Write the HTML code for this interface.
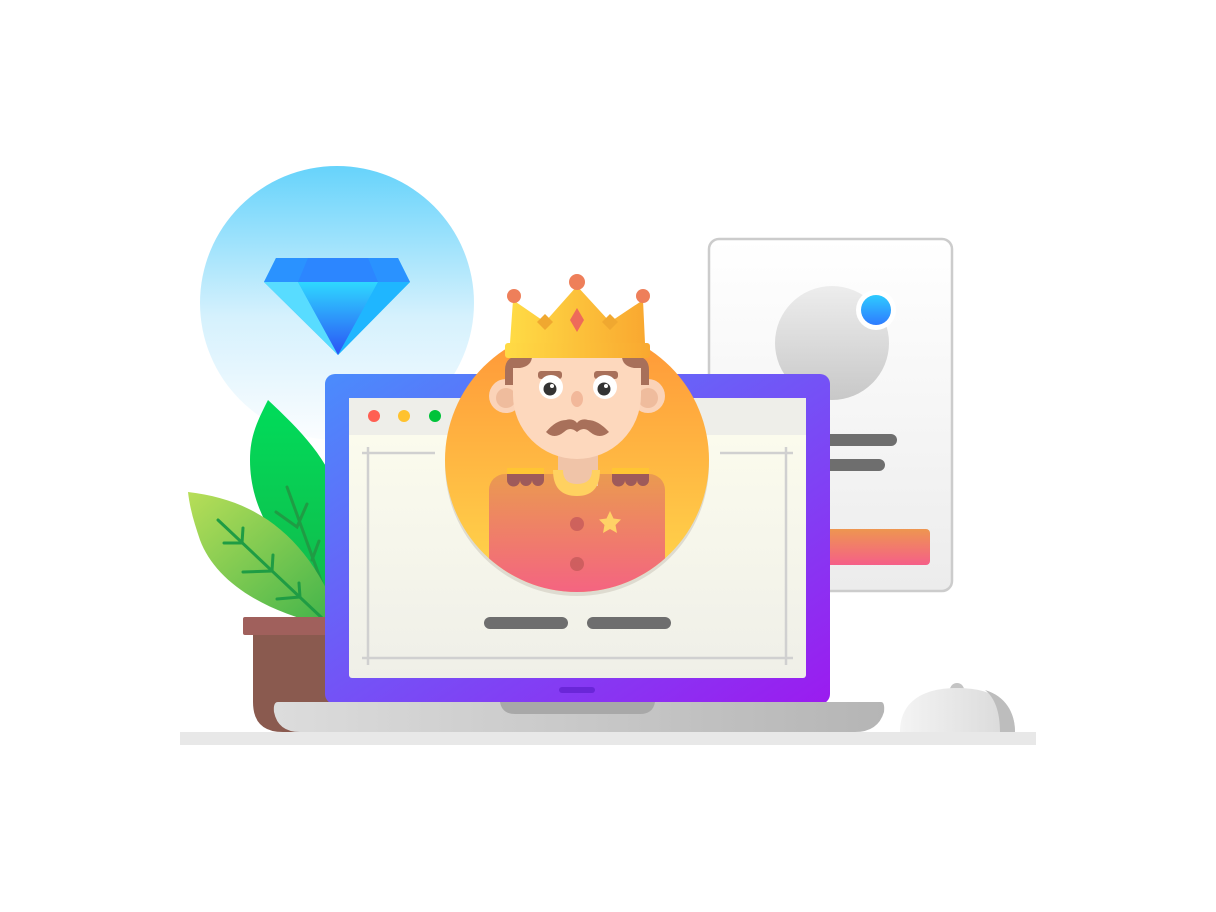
<!DOCTYPE html>
<html><head><meta charset="utf-8"><style>html,body{margin:0;padding:0;background:#fff;width:1216px;height:912px;overflow:hidden}svg{display:block}</style></head>
<body>
<svg width="1216" height="912" viewBox="0 0 1216 912" xmlns="http://www.w3.org/2000/svg">
<defs>
<linearGradient id="sky" x1="0" y1="0" x2="0" y2="1"><stop offset="0" stop-color="#66d3fb"/><stop offset="0.55" stop-color="#d5f1fd"/><stop offset="1" stop-color="#fbfdff"/></linearGradient>
<linearGradient id="lap" x1="0" y1="0" x2="1" y2="1"><stop offset="0" stop-color="#4a8cfc"/><stop offset="0.5" stop-color="#7452f6"/><stop offset="1" stop-color="#9b1bef"/></linearGradient>
<linearGradient id="scr" x1="0" y1="0" x2="0" y2="1"><stop offset="0" stop-color="#fdfdee"/><stop offset="1" stop-color="#efefe8"/></linearGradient>
<linearGradient id="base" x1="0" y1="0" x2="1" y2="0"><stop offset="0" stop-color="#dcdcdc"/><stop offset="1" stop-color="#b5b5b5"/></linearGradient>
<linearGradient id="card" x1="0" y1="0" x2="0" y2="1"><stop offset="0" stop-color="#fff"/><stop offset="1" stop-color="#ececec"/></linearGradient>
<linearGradient id="gball" x1="0" y1="0" x2="0" y2="1"><stop offset="0" stop-color="#ededed"/><stop offset="1" stop-color="#c8c8c8"/></linearGradient>
<linearGradient id="blue" x1="0" y1="0" x2="0" y2="1"><stop offset="0" stop-color="#2ecbff"/><stop offset="1" stop-color="#2e7bff"/></linearGradient>
<linearGradient id="btn" x1="0" y1="0" x2="0" y2="1"><stop offset="0" stop-color="#ee9650"/><stop offset="1" stop-color="#f55f88"/></linearGradient>
<linearGradient id="ava" x1="0" y1="0" x2="0" y2="1"><stop offset="0" stop-color="#ff9638"/><stop offset="1" stop-color="#ffd84c"/></linearGradient>
<linearGradient id="body" x1="0" y1="0" x2="0" y2="1"><stop offset="0" stop-color="#ea9a50"/><stop offset="1" stop-color="#f65a8a"/></linearGradient>
<linearGradient id="crown" x1="0" y1="0" x2="1" y2="0"><stop offset="0" stop-color="#ffdb45"/><stop offset="1" stop-color="#f9a830"/></linearGradient>
<linearGradient id="leaf1" x1="0" y1="0" x2="0" y2="1"><stop offset="0" stop-color="#00dc5a"/><stop offset="1" stop-color="#14b84a"/></linearGradient>
<linearGradient id="leaf2" x1="0" y1="0" x2="1" y2="1"><stop offset="0" stop-color="#b8de58"/><stop offset="1" stop-color="#3cb24a"/></linearGradient>
<linearGradient id="gem" x1="0" y1="0" x2="0" y2="1"><stop offset="0" stop-color="#2ed8ff"/><stop offset="1" stop-color="#2c52f5"/></linearGradient>
<linearGradient id="mouse" x1="0" y1="0" x2="1" y2="0"><stop offset="0" stop-color="#f4f4f4"/><stop offset="1" stop-color="#d8d8d8"/></linearGradient>
<clipPath id="avc"><circle cx="577" cy="460" r="132"/></clipPath>
</defs>

<circle cx="337" cy="303" r="137" fill="url(#sky)"/>
<polygon points="276,258 398,258 410,282 338,355 264,282" fill="#22b8ff"/>
<polygon points="276,258 398,258 410,282 264,282" fill="#2a92ff"/>
<polygon points="308,258 368,258 378,282 298,282" fill="#2c86ff"/>
<polygon points="264,282 298,282 338,355" fill="#58dcff"/>
<polygon points="298,282 378,282 338,355" fill="url(#gem)"/>
<polygon points="378,282 410,282 338,355" fill="#1fb6ff"/>

<rect x="709" y="239" width="243" height="352" rx="10" fill="url(#card)" stroke="#cccccc" stroke-width="2.5"/>
<circle cx="832" cy="343" r="57" fill="url(#gball)"/>
<circle cx="876" cy="310" r="20" fill="#fff"/>
<circle cx="876" cy="310" r="15" fill="url(#blue)"/>
<rect x="810" y="434" width="87" height="12" rx="6" fill="#6e6e6e"/>
<rect x="810" y="459" width="75" height="12" rx="6" fill="#6e6e6e"/>
<rect x="800" y="529" width="130" height="36" rx="4" fill="url(#btn)"/>

<rect x="180" y="732" width="856" height="13" fill="#e8e8e8"/>

<circle cx="957" cy="690" r="7" fill="#c4c4c4"/>
<path d="M900,732 C900,700 925,688 957,688 C990,688 1015,700 1015,732 Z" fill="url(#mouse)"/>
<path d="M985,690 C1005,696 1015,712 1015,732 L1000,732 C1000,712 995,698 985,690 Z" fill="#bdbdbd"/>

<path d="M268,400 C300,430 330,460 340,500 L340,610 L325,600 C290,560 250,520 250,460 C250,435 258,420 268,400 Z" fill="url(#leaf1)"/>
<g stroke="#1f9c44" stroke-width="3" fill="none" stroke-linecap="round"><path d="M287,487 L328,600 M276,512 L297,527 L307,504 M312,560 L319,541"/></g>
<path d="M188,492 C260,500 310,540 340,620 L325,625 C260,610 215,580 200,540 C195,525 190,510 188,492 Z" fill="url(#leaf2)"/>
<g stroke="#1f9c44" stroke-width="3" fill="none" stroke-linecap="round"><path d="M218,520 L322,618"/><path d="M224,543 L242,543 L243,528 M243,572 L272,571 L273,555 M277,599 L300,597 L299,583"/></g>
<rect x="243" y="617" width="90" height="18" rx="2" fill="#a0605c"/>
<path d="M253,635 H330 V732 H283 Q253,732 253,702 Z" fill="#8a5a4f"/>

<rect x="325" y="374" width="505" height="330" rx="10" fill="url(#lap)"/>
<rect x="349" y="398" width="457" height="280" rx="3" fill="url(#scr)"/>
<rect x="349" y="398" width="457" height="37" fill="#eeeee9"/>
<circle cx="374" cy="416" r="6" fill="#ff5f52"/>
<circle cx="404" cy="416" r="6" fill="#ffc22e"/>
<circle cx="435" cy="416" r="6" fill="#00c33a"/>
<g stroke="#d0d0d0" stroke-width="2.5"><path d="M362,453 H435 M720,453 H793 M368,447 V665 M786,447 V665 M362,658 H793"/></g>
<rect x="484" y="617" width="84" height="12" rx="6" fill="#6e6e6e"/>
<rect x="587" y="617" width="84" height="12" rx="6" fill="#6e6e6e"/>
<rect x="559" y="687" width="36" height="6" rx="3" fill="#6a26d8"/>
<path d="M274,702 H881 Q885,702 884,712 Q878,732 855,732 H300 Q278,732 274,712 Q273,702 278,702 Z" fill="url(#base)"/>
<path d="M500,702 H655 Q653,714 640,714 H515 Q502,714 500,702 Z" fill="#a8a8a8"/>

<circle cx="577" cy="464" r="132" fill="#dedbd0"/>
<circle cx="577" cy="460" r="132" fill="url(#ava)"/>
<g clip-path="url(#avc)">
<rect x="489" y="474" width="176" height="140" rx="16" fill="url(#body)"/>
</g>
<rect x="558" y="450" width="40" height="36" fill="#f0c4a8"/>
<path d="M553,470 H563 Q563,484 577,484 Q592,484 592,470 H600 Q600,496 577,496 Q553,496 553,470 Z" fill="#ffd160"/>
<rect x="507" y="468" width="37" height="6" fill="#ffc533"/>
<rect x="612" y="468" width="37" height="6" fill="#ffc533"/>
<g fill="#9e5a5a"><path d="M507,474 H544 V480 A6,6 0 0 1 532,480 A6,6 0 0 1 520,480 A6,6 0 0 1 507,480 Z"/><path d="M612,474 H649 V480 A6,6 0 0 1 637,480 A6,6 0 0 1 625,480 A6,6 0 0 1 612,480 Z"/></g>
<circle cx="577" cy="524" r="7" fill="#c55a5a" opacity="0.8"/>
<circle cx="577" cy="564" r="7" fill="#c55a5a" opacity="0.8"/>
<polygon points="610,511 613.5,518.5 621,519.5 615.5,525 617,533 610,529 603,533 604.5,525 599,519.5 606.5,518.5" fill="#ffd166"/>
<circle cx="506" cy="396" r="17" fill="#fbd3b8"/><circle cx="506" cy="398" r="10" fill="#efbc9d"/>
<circle cx="648" cy="396" r="17" fill="#fbd3b8"/><circle cx="648" cy="398" r="10" fill="#efbc9d"/>
<path d="M513,355 H641 V395 A64,64 0 0 1 513,395 Z" fill="#fdd8bd"/>
<path d="M505,385 V370 Q505,356 520,356 H532 Q532,366 520,368 H513 V385 Z" fill="#a8705a"/>
<path d="M649,385 V370 Q649,356 634,356 H622 Q622,366 634,368 H641 V385 Z" fill="#a8705a"/>
<rect x="538" y="371" width="24" height="8" rx="3" fill="#a8705a"/>
<rect x="594" y="371" width="24" height="8" rx="3" fill="#a8705a"/>
<circle cx="551" cy="387" r="12" fill="#fff"/><circle cx="550" cy="389" r="6.5" fill="#333"/><circle cx="552" cy="386" r="2" fill="#fff"/>
<circle cx="605" cy="387" r="12" fill="#fff"/><circle cx="604" cy="389" r="6.5" fill="#333"/><circle cx="606" cy="386" r="2" fill="#fff"/>
<ellipse cx="577" cy="399" rx="6" ry="8" fill="#f2b89a"/>
<path d="M546,432 Q556,420 566,420 Q573,418 577,423 Q581,418 588,420 Q598,420 609,432 Q600,440 590,432 Q584,426 577,432 Q570,426 564,432 Q554,440 546,432 Z" fill="#a8705a"/>
<path d="M510,343 L513,300 L545,322 L577,286 L610,322 L643,300 L645,343 Z" fill="url(#crown)"/>
<polygon points="545,314 553,322 545,330 537,322" fill="#f0a830"/>
<polygon points="610,314 618,322 610,330 602,322" fill="#f0a830"/>
<polygon points="577,308 584,320 577,332 570,320" fill="#ee6a5a"/>
<circle cx="514" cy="296" r="7" fill="#ee7f5a"/>
<circle cx="577" cy="282" r="8" fill="#ee7f5a"/>
<circle cx="643" cy="296" r="7" fill="#ee7f5a"/>
<rect x="505" y="343" width="145" height="15" rx="3" fill="url(#crown)"/>
</svg>
</body></html>
